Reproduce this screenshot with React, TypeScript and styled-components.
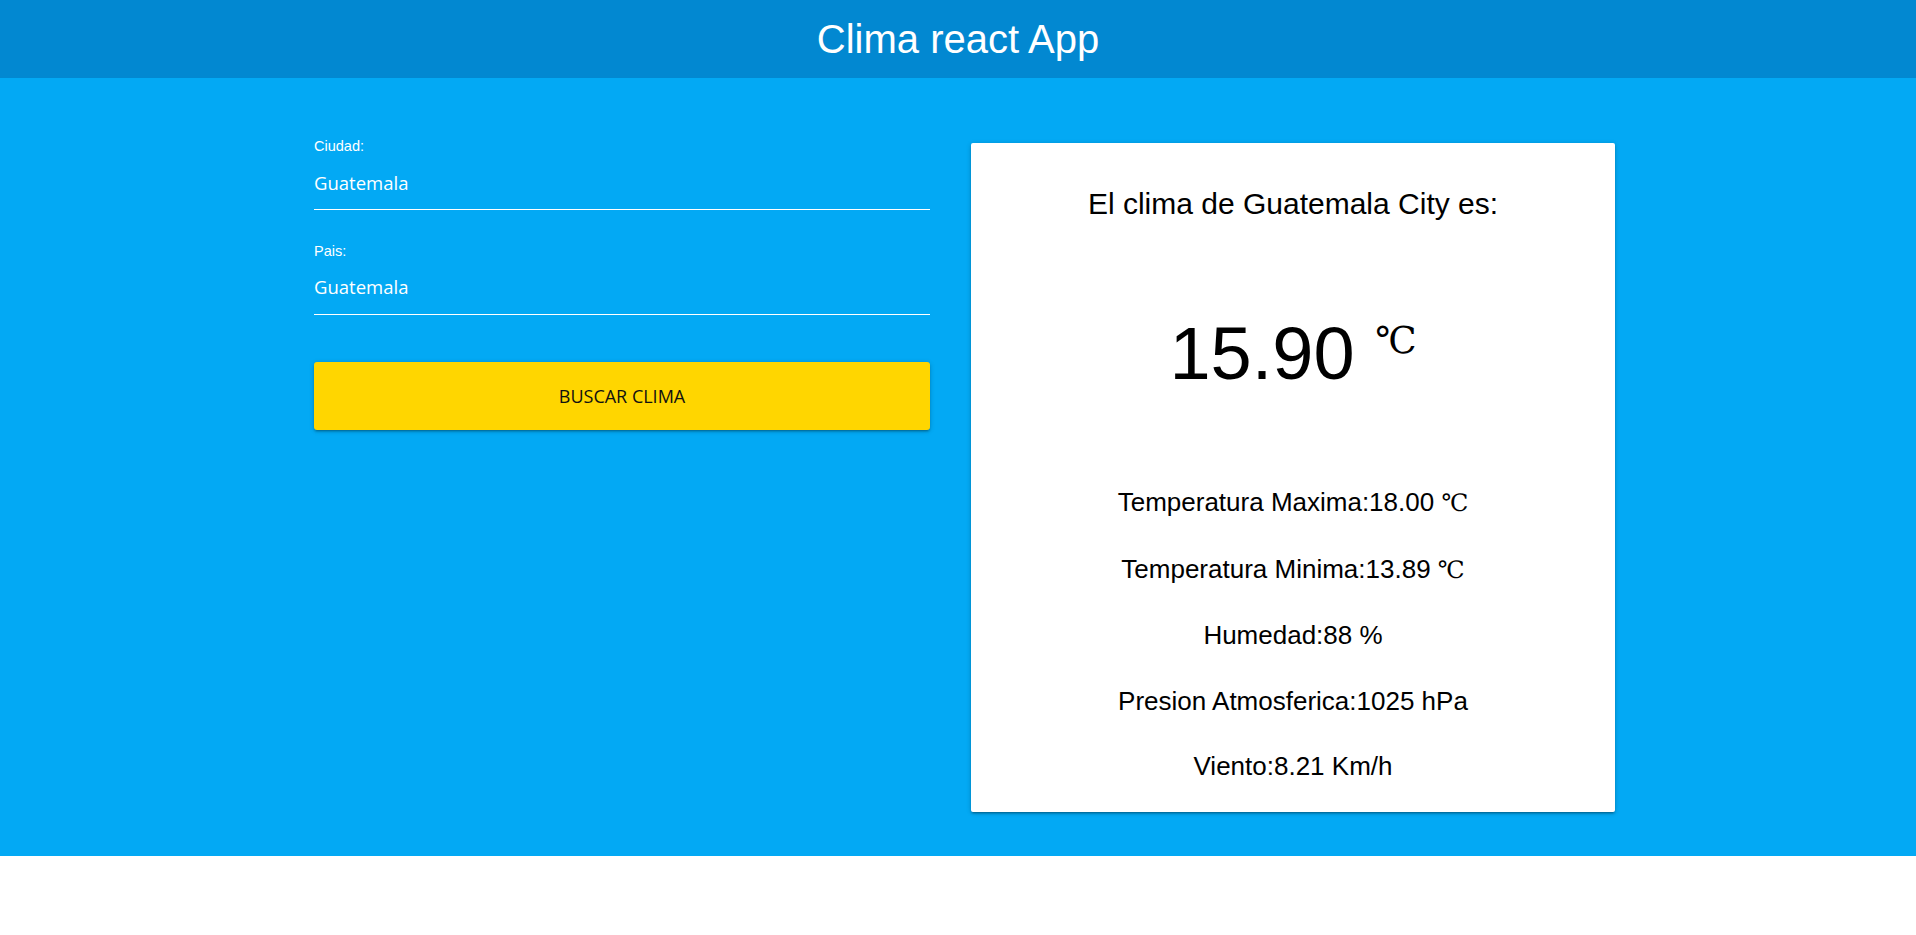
import React from "react";
import styled, { createGlobalStyle } from "styled-components";

const GlobalStyle = createGlobalStyle`
  html, body { margin: 0; padding: 0; background: #ffffff; }
  body { font-family: "Liberation Sans", Arial, sans-serif; }
  * { box-sizing: border-box; }
`;

const Header = styled.header`
  height: 78px;
  background: #0288d1;
  color: #ffffff;
  text-align: center;
  font-family: "Liberation Sans", Arial, sans-serif;
  font-size: 40px;
  line-height: 78px;
`;

const Main = styled.main`
  background: #03a9f4;
  padding: 59px 0 44px 314px;
`;

const Columns = styled.div`
  display: flex;
  align-items: flex-start;
  gap: 41px;
`;

const Form = styled.form`
  width: 616px;
  display: flex;
  flex-direction: column;
`;

const Field = styled.div<{ $last?: boolean }>`
  display: flex;
  flex-direction: column;
  margin-bottom: ${(p) => (p.$last ? "46.7px" : "31.4px")};
`;

const Label = styled.label`
  font-family: "Liberation Sans", Arial, sans-serif;
  font-size: 14.5px;
  line-height: 18px;
  color: #ffffff;
`;

const Input = styled.input`
  height: 55.4px;
  padding: 0;
  margin: 0;
  border: none;
  border-bottom: 1px solid #ffffff;
  background: transparent;
  color: #ffffff;
  font-family: "Open Sans", "Noto Sans", sans-serif;
  font-size: 18.5px;
  outline: none;
`;

const Button = styled.button`
  height: 68px;
  width: 100%;
  border: none;
  border-radius: 3px;
  background: #ffd600;
  color: #111111;
  font-family: "Open Sans", "Noto Sans", sans-serif;
  font-size: 18px;
  letter-spacing: 0;
  text-transform: uppercase;
  cursor: pointer;
  box-shadow: 0 2px 2px 0 rgba(0, 0, 0, 0.14), 0 3px 1px -2px rgba(0, 0, 0, 0.12),
    0 1px 5px 0 rgba(0, 0, 0, 0.2);
`;

const Card = styled.section`
  width: 644px;
  margin-top: 6px;
  background: #ffffff;
  border-radius: 2px;
  padding: 41px 0 12px;
  text-align: center;
  color: #000000;
  font-family: "Liberation Sans", Arial, sans-serif;
  box-shadow: 0 2px 2px 0 rgba(0, 0, 0, 0.14), 0 3px 1px -2px rgba(0, 0, 0, 0.12),
    0 1px 5px 0 rgba(0, 0, 0, 0.2);
`;

const Title = styled.h2`
  margin: 0;
  font-weight: 400;
  font-size: 30px;
  line-height: 40px;
`;

const Temp = styled.p`
  margin: 84.7px 0 71.4px;
  font-size: 74px;
  line-height: 90px;
`;

const BigUnit = styled.span`
  display: inline-block;
  vertical-align: top;
  margin-top: 13px;
  font-family: "Liberation Serif", "DejaVu Serif", serif;
  font-size: 37px;
  line-height: 1;
`;

const Row = styled.p`
  margin: 0;
  font-size: 26px;
  line-height: 65.5px;
`;

const Unit = styled.span`
  font-family: "Liberation Serif", "DejaVu Serif", serif;
  font-size: 24px;
`;

export default function App() {
  return (
    <>
      <GlobalStyle />
      <Header>Clima react App</Header>
      <Main>
        <Columns>
          <Form onSubmit={(e) => e.preventDefault()}>
            <Field>
              <Label htmlFor="ciudad">Ciudad:</Label>
              <Input id="ciudad" type="text" defaultValue="Guatemala" />
            </Field>
            <Field $last>
              <Label htmlFor="pais">Pais:</Label>
              <Input id="pais" type="text" defaultValue="Guatemala" />
            </Field>
            <Button type="submit">Buscar Clima</Button>
          </Form>
          <Card>
            <Title>El clima de Guatemala City es:</Title>
            <Temp>
              15.90 <BigUnit>℃</BigUnit>
            </Temp>
            <Row>
              Temperatura Maxima:18.00 <Unit>℃</Unit>
            </Row>
            <Row>
              Temperatura Minima:13.89 <Unit>℃</Unit>
            </Row>
            <Row>Humedad:88 %</Row>
            <Row>Presion Atmosferica:1025 hPa</Row>
            <Row>Viento:8.21 Km/h</Row>
          </Card>
        </Columns>
      </Main>
    </>
  );
}
